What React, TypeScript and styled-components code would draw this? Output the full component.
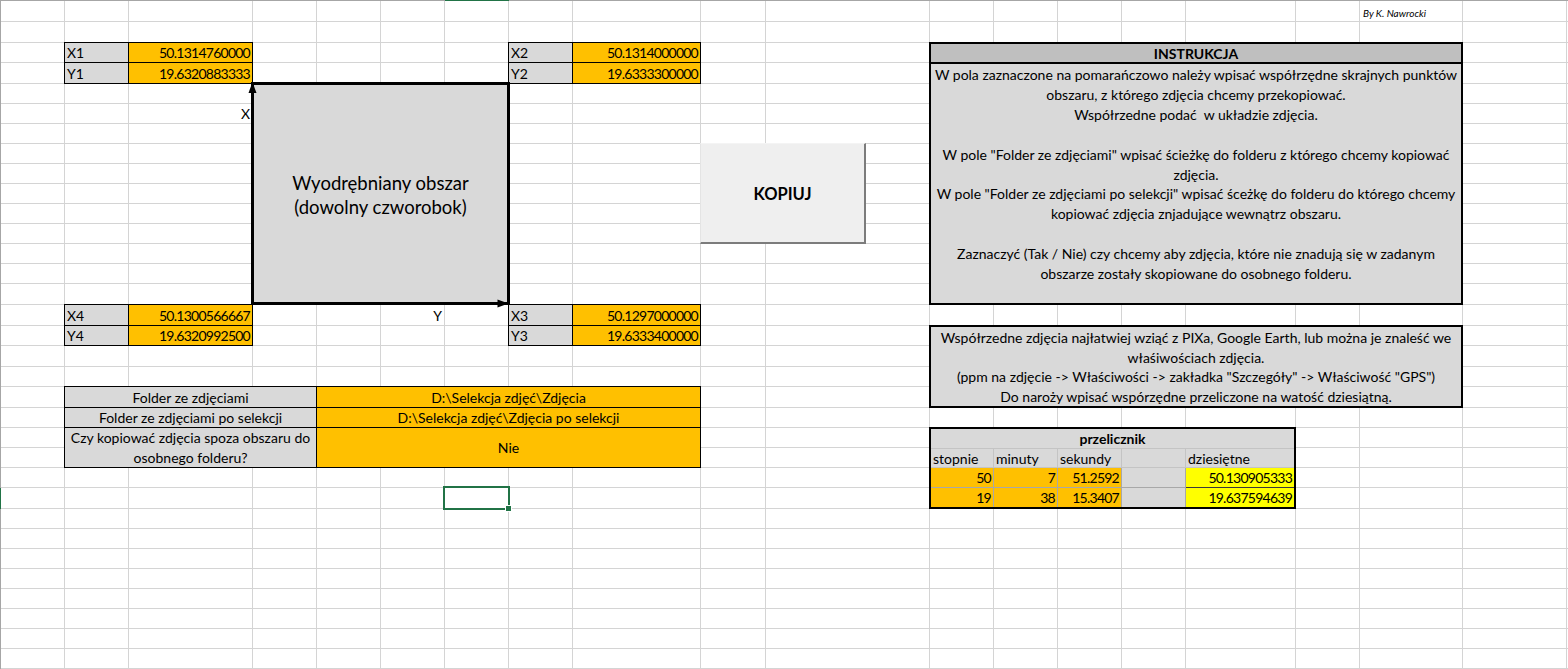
import React from "react";
import styled, { createGlobalStyle, css } from "styled-components";

const COLS = [64, 64, 124, 64, 64, 64, 64, 64, 128, 65, 164, 64, 64, 64, 64, 110, 64, 103, 104, 64];
const ROWS = [21, 21, 20, 21, 20, 20, 20, 20, 20, 20, 20, 20, 20, 20, 21, 21, 20, 21, 20, 21, 20, 20, 20, 20, 21, 20, 20, 20, 20, 20, 20, 20, 20, 20];
const LETTERS = "ABCDEFGHIJKLMNOPQRST".split("");
const SELECTED_COL = "G";
const SELECTED_ROW = 25;

const col = (l: string) => l.charCodeAt(0) - 63;

const GRID = "#d4d4d4";
const GRAY = "#d9d9d9";
const ORANGE = "#ffc000";
const YELLOW = "#ffff00";
const GREEN = "#217346";
const FONT = `Lato, "Noto Sans", sans-serif`;

const GlobalStyle = createGlobalStyle`
  html, body { margin: 0; padding: 0; background: #fff; }
  body { font-family: ${FONT}; color: #000; overflow: hidden; }
`;

type Area = { $c: string; $cs?: number; $r: number; $rs?: number };

const placed = css<Area>`
  grid-column: ${(p) => col(p.$c)} / span ${(p) => p.$cs ?? 1};
  grid-row: ${(p) => p.$r + 1} / span ${(p) => p.$rs ?? 1};
`;

const Sheet = styled.div`
  display: grid;
  grid-template-columns: 1px ${COLS.map((w) => `${w}px`).join(" ")};
  grid-template-rows: 1px ${ROWS.map((h) => `${h}px`).join(" ")};
  width: 1568px;
  height: 669px;
  overflow: hidden;
  font-size: 14px;
`;

const TopEdge = styled.div<{ $col: number; $on: boolean }>`
  grid-column: ${(p) => p.$col};
  grid-row: 1;
  background: ${(p) => (p.$on ? GREEN : "#a6a6a6")};
`;

const LeftEdge = styled.div<{ $row: number; $on: boolean }>`
  grid-column: 1;
  grid-row: ${(p) => p.$row};
  background: ${(p) => (p.$on ? GREEN : "#a6a6a6")};
`;

const GridCell = styled.div<{ $col: number; $row: number }>`
  grid-column: ${(p) => p.$col};
  grid-row: ${(p) => p.$row};
  border-right: 1px solid ${GRID};
  border-bottom: 1px solid ${GRID};
`;

type Align = "left" | "right" | "center";
const justify = (a?: Align) => (a === "right" ? "flex-end" : a === "center" ? "center" : "flex-start");

const Cell = styled.div<Area & { $bg: string; $align?: Align; $num?: boolean }>`
  ${placed}
  margin: -1px 0 0 -1px;
  border: 1px solid #000;
  background: ${(p) => p.$bg};
  display: flex;
  align-items: center;
  justify-content: ${(p) => justify(p.$align)};
  text-align: ${(p) => p.$align ?? "left"};
  padding: 1px 2px 0 2px;
  line-height: 20px;
  white-space: nowrap;
  overflow: hidden;
  letter-spacing: ${(p) => (p.$num ? "-0.75px" : "normal")};
`;

const PlainText = styled.div<Area & { $align?: Align }>`
  ${placed}
  display: flex;
  align-items: flex-end;
  justify-content: ${(p) => justify(p.$align)};
  padding: 0 3px 1px 3px;
  line-height: 18px;
`;

const Signature = styled.div<Area>`
  ${placed}
  display: flex;
  align-items: flex-end;
  padding: 0 0 3px 3px;
  font-size: 10px;
  font-style: italic;
  white-space: nowrap;
`;

const Region = styled.div`
  grid-column: ${col("D")} / span 4;
  grid-row: 6 / span 11;
  margin: -2px -1px 0 -2px;
  border: 3px solid #000;
  background: ${GRAY};
  position: relative;
  display: flex;
  align-items: center;
  justify-content: center;
  text-align: center;
  font-size: 18.5px;
  line-height: 24px;
  padding-top: 2px;
`;

const Arrows = styled.svg`
  position: absolute;
  left: -3px;
  top: -3px;
  overflow: visible;
`;

const CopyButton = styled.div`
  grid-column: ${col("J")} / span 2;
  grid-row: 9 / span 5;
  justify-self: start;
  width: 166px;
  margin: -1px 0 0 -1px;
  box-sizing: border-box;
  background: #efefef;
  border-top: 1px solid #f4f4f4;
  border-left: 1px solid #e4e4e4;
  border-right: 2px solid #7c7c7c;
  border-bottom: 2px solid #7c7c7c;
  display: flex;
  align-items: center;
  justify-content: center;
  font-weight: 700;
  font-size: 16.5px;
  padding-top: 2px;
`;

const Selection = styled.div`
  grid-column: ${col(SELECTED_COL)};
  grid-row: ${SELECTED_ROW + 1};
  margin: -2px -1px -1px -2px;
  border: 2px solid ${GREEN};
  position: relative;
`;

const Handle = styled.div`
  position: absolute;
  right: -4px;
  bottom: -4px;
  width: 7px;
  height: 7px;
  box-sizing: border-box;
  background: ${GREEN};
  border: 1px solid #fff;
`;

const Panel = styled.div<Area>`
  ${placed}
  margin: -1px 0 0 -1px;
  border: 2px solid #000;
  background: ${GRAY};
  display: flex;
  flex-direction: column;
  overflow: hidden;
`;

const PanelHeader = styled.div`
  flex: 0 0 19px;
  box-sizing: border-box;
  background: #bfbfbf;
  border-bottom: 2px solid #000;
  display: flex;
  align-items: center;
  justify-content: center;
  font-weight: 700;
  padding-top: 1px;
`;

const PanelLine = styled.div`
  flex: 1 1 0;
  display: flex;
  align-items: center;
  justify-content: center;
  white-space: pre;
  padding-top: 1px;
`;

const Converter = styled.div<Area>`
  ${placed}
  margin: -1px 0 0 -1px;
  border: 2px solid #000;
  display: grid;
  grid-template-columns: 63px 64px 64px 64px 1fr;
  grid-template-rows: repeat(4, 1fr);
  overflow: hidden;
`;

const ConvTitle = styled.div`
  grid-column: 1 / -1;
  background: ${GRAY};
  border-bottom: 1px solid #c4c4c4;
  display: flex;
  align-items: center;
  justify-content: center;
  font-weight: 700;
  padding-top: 1px;
`;

const ConvCell = styled.div<{ $bg: string; $line: string; $align?: Align; $last?: boolean; $bottom?: boolean; $num?: boolean }>`
  background: ${(p) => p.$bg};
  border-right: ${(p) => (p.$last ? "none" : `1px solid ${p.$line}`)};
  border-bottom: ${(p) => (p.$bottom ? "none" : `1px solid ${p.$line}`)};
  display: flex;
  align-items: center;
  justify-content: ${(p) => justify(p.$align)};
  padding: 1px 2px 0 2px;
  white-space: nowrap;
  letter-spacing: ${(p) => (p.$num ? "-0.75px" : "normal")};
`;

const coords = [
  { lc: "B", vc: "C", r: 3, label: "X1", value: "50.1314760000" },
  { lc: "B", vc: "C", r: 4, label: "Y1", value: "19.6320883333" },
  { lc: "H", vc: "I", r: 3, label: "X2", value: "50.1314000000" },
  { lc: "H", vc: "I", r: 4, label: "Y2", value: "19.6333300000" },
  { lc: "B", vc: "C", r: 16, label: "X4", value: "50.1300566667" },
  { lc: "B", vc: "C", r: 17, label: "Y4", value: "19.6320992500" },
  { lc: "H", vc: "I", r: 16, label: "X3", value: "50.1297000000" },
  { lc: "H", vc: "I", r: 17, label: "Y3", value: "19.6333400000" },
];

const instructions = [
  "W pola zaznaczone na pomarańczowo należy wpisać współrzędne skrajnych punktów",
  "obszaru, z którego zdjęcia chcemy przekopiować.",
  "Współrzedne podać  w układzie zdjęcia.",
  "",
  'W pole "Folder ze zdjęciami" wpisać ścieżkę do folderu z którego chcemy kopiować',
  "zdjęcia.",
  'W pole "Folder ze zdjęciami po selekcji" wpisać śceżkę do folderu do którego chcemy',
  "kopiować zdjęcia znjadujące wewnątrz obszaru.",
  "",
  "Zaznaczyć (Tak / Nie) czy chcemy aby zdjęcia, które nie znadują się w zadanym",
  "obszarze zostały skopiowane do osobnego folderu.",
  "",
];

const hints = [
  "Współrzedne zdjęcia najłatwiej wziąć z PIXa, Google Earth, lub można je znaleść we",
  "właśiwościach zdjęcia.",
  '(ppm na zdjęcie -> Właściwości -> zakładka "Szczegóły" -> Właściwość "GPS")',
  "Do naroży wpisać wspórzędne przeliczone na watość dziesiątną.",
];

const convHeaders = ["stopnie", "minuty", "sekundy", "", "dziesiętne"];
const convRows = [
  ["50", "7", "51.2592", "", "50.130905333"],
  ["19", "38", "15.3407", "", "19.637594639"],
];

export default function App() {
  const bg: React.ReactNode[] = [];
  bg.push(<TopEdge key="corner" $col={1} $on={false} />);
  LETTERS.forEach((l, i) => bg.push(<TopEdge key={`t${l}`} $col={i + 2} $on={l === SELECTED_COL} />));
  ROWS.forEach((_, ri) => {
    bg.push(<LeftEdge key={`l${ri}`} $row={ri + 2} $on={ri + 1 === SELECTED_ROW} />);
    LETTERS.forEach((l, ci) => bg.push(<GridCell key={`${l}${ri}`} $col={ci + 2} $row={ri + 2} />));
  });

  return (
    <>
      <GlobalStyle />
      <Sheet>
        {bg}

        <Signature $c="R" $r={1}>By K. Nawrocki</Signature>

        {coords.map((c) => (
          <React.Fragment key={c.label}>
            <Cell $c={c.lc} $r={c.r} $bg={GRAY}>{c.label}</Cell>
            <Cell $c={c.vc} $r={c.r} $bg={ORANGE} $align="right" $num>{c.value}</Cell>
          </React.Fragment>
        ))}

        <PlainText $c="C" $r={6} $align="right">X</PlainText>

        <Region>
          <div>
            Wyodrębniany obszar
            <br />
            (dowolny czworobok)
          </div>
          <Arrows width="259" height="223" viewBox="0 0 259 223">
            <polygon points="1.5,0 -2.5,11 5.5,11" fill="#000" />
            <polygon points="257.5,221.5 246.5,217.5 246.5,225.5" fill="#000" />
          </Arrows>
        </Region>

        <PlainText $c="F" $r={16} $align="right">Y</PlainText>

        <CopyButton>KOPIUJ</CopyButton>

        <Cell $c="B" $cs={3} $r={20} $bg={GRAY} $align="center">Folder ze zdjęciami</Cell>
        <Cell $c="E" $cs={5} $r={20} $bg={ORANGE} $align="center">D:\Selekcja zdjęć\Zdjęcia</Cell>
        <Cell $c="B" $cs={3} $r={21} $bg={GRAY} $align="center">Folder ze zdjęciami po selekcji</Cell>
        <Cell $c="E" $cs={5} $r={21} $bg={ORANGE} $align="center">D:\Selekcja zdjęć\Zdjęcia po selekcji</Cell>
        <Cell $c="B" $cs={3} $r={22} $rs={2} $bg={GRAY} $align="center">
          Czy kopiować zdjęcia spoza obszaru do
          <br />
          osobnego folderu?
        </Cell>
        <Cell $c="E" $cs={5} $r={22} $rs={2} $bg={ORANGE} $align="center">Nie</Cell>

        <Selection>
          <Handle />
        </Selection>

        <Panel $c="L" $cs={7} $r={3} $rs={13}>
          <PanelHeader>INSTRUKCJA</PanelHeader>
          {instructions.map((t, i) => (
            <PanelLine key={i}>{t}</PanelLine>
          ))}
        </Panel>

        <Panel $c="L" $cs={7} $r={17} $rs={4}>
          {hints.map((t, i) => (
            <PanelLine key={i}>{t}</PanelLine>
          ))}
        </Panel>

        <Converter $c="L" $cs={5} $r={22} $rs={4}>
          <ConvTitle>przelicznik</ConvTitle>
          {convHeaders.map((h, i) => (
            <ConvCell key={`h${i}`} $bg={GRAY} $line="#c4c4c4" $last={i === 4}>
              {h}
            </ConvCell>
          ))}
          {convRows.map((row, ri) =>
            row.map((v, i) => (
              <ConvCell
                key={`${ri}-${i}`}
                $bg={i === 3 ? GRAY : i === 4 ? YELLOW : ORANGE}
                $line={i === 4 ? "#3a3a3a" : "#a8a8a8"}
                $align="right"
                $last={i === 4}
                $bottom={ri === 1}
                $num
              >
                {v}
              </ConvCell>
            ))
          )}
        </Converter>
      </Sheet>
    </>
  );
}
